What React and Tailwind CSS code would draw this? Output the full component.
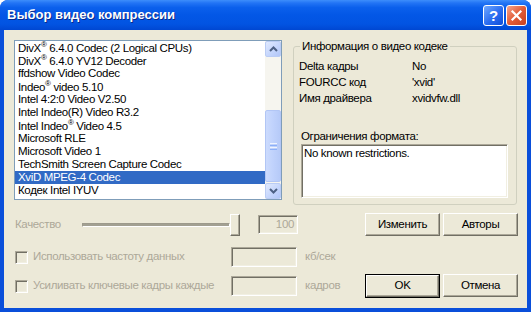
const items = [
  ["DivX", "®", " 6.4.0 Codec (2 Logical CPUs)"],
  ["DivX", "®", " 6.4.0 YV12 Decoder"],
  ["ffdshow Video Codec"],
  ["Indeo", "®", " video 5.10"],
  ["Intel 4:2:0 Video V2.50"],
  ["Intel Indeo(R) Video R3.2"],
  ["Intel Indeo", "®", " Video 4.5"],
  ["Microsoft RLE"],
  ["Microsoft Video 1"],
  ["TechSmith Screen Capture Codec"],
  ["XviD MPEG-4 Codec"],
  ["Кодек Intel IYUV"],
];

function ScrollBtn({ up }) {
  return (
    <div className="h-[16px] w-[16px] shrink-0 rounded-[2px] border border-[#BACCF4] bg-[linear-gradient(to_bottom_right,#E1EAFE,#C3D4FC_60%,#B1C6F8)] flex items-center justify-center">
      <svg width="9" height="6" viewBox="0 0 9 6">
        {up ? (
          <path d="M1 5 L4.5 1.5 L8 5" fill="none" stroke="#4D6185" strokeWidth="2" />
        ) : (
          <path d="M1 1 L4.5 4.5 L8 1" fill="none" stroke="#4D6185" strokeWidth="2" />
        )}
      </svg>
    </div>
  );
}

function Scrollbar() {
  return (
    <div className="w-[16px] shrink-0 flex flex-col bg-[#F6F5EF]">
      <ScrollBtn up />
      <div className="h-[53px] shrink-0" />
      <div className="h-[72px] shrink-0 rounded-[2px] border border-[#B2C6F5] bg-[linear-gradient(to_right,#CCDBFD,#C0D2FC_50%,#B6CAF8)] flex items-center justify-center">
        <div className="flex flex-col gap-[1px] w-[7px]">
          <div className="h-[1px] bg-[#EEF4FE]" />
          <div className="h-[1px] bg-[#8CB0F8]" />
          <div className="h-[1px] bg-[#EEF4FE]" />
          <div className="h-[1px] bg-[#8CB0F8]" />
        </div>
      </div>
      <div className="flex-1" />
      <ScrollBtn />
    </div>
  );
}

function Sunken({ className = "", children }) {
  return (
    <div className={`border border-t-[#ACA899] border-l-[#ACA899] border-r-white border-b-white shadow-[inset_1px_1px_0_#716F64,inset_-1px_-1px_0_#F1EFE2] ${className}`}>
      {children}
    </div>
  );
}

function Button({ children, def }) {
  const inner = (
    <div className="w-full h-full flex items-center justify-center border border-t-white border-l-white border-r-[#716F64] border-b-[#716F64] shadow-[inset_-1px_-1px_0_#ACA899] bg-[#ECE9D8]">
      {children}
    </div>
  );
  if (def) {
    return <div className="w-[75px] h-[24px] border border-black">{inner}</div>;
  }
  return <div className="w-[75px] h-[23px]">{inner}</div>;
}

function Checkbox() {
  return (
    <div className="w-[13px] h-[13px] shrink-0 bg-[#ECE9D8] border border-t-[#ACA899] border-l-[#ACA899] border-r-white border-b-white shadow-[inset_1px_1px_0_#716F64,inset_-1px_-1px_0_#F1EFE2]" />
  );
}

export default function App() {
  return (
    <div className="w-[531px] h-[312px] bg-white font-['Liberation_Sans',Arial,sans-serif] text-[11.5px] tracking-[-0.35px] text-black">
      <div className="w-full h-full flex flex-col rounded-t-[8px] overflow-hidden bg-[#0A4FDA]">
        <div className="h-[30px] shrink-0 flex items-center pl-[7px] pr-[4px] bg-[linear-gradient(to_bottom,#3D8EFB_0%,#2274F5_10%,#0B60EC_25%,#0357E6_50%,#0254E2_80%,#0047D2_100%)]">
          <span className="text-white font-bold text-[13px] tracking-[0px] [text-shadow:1px_1px_0_#0A2A8A]">
            Выбор видео компрессии
          </span>
          <div className="ml-auto flex gap-[2px]">
            <div className="w-[21px] h-[21px] rounded-[3px] border border-white bg-[linear-gradient(135deg,#6FA8FF,#2A6CF0_55%,#0E4DD8)] flex items-center justify-center text-white font-bold text-[15px] leading-none tracking-[0px]">
              ?
            </div>
            <div className="w-[21px] h-[21px] rounded-[3px] border border-white bg-[linear-gradient(135deg,#F5A58E,#E25C37_50%,#C6411F)] flex items-center justify-center">
              <svg width="19" height="19" viewBox="0 0 19 19">
                <path d="M5.5 5.5 L13.5 13.5 M13.5 5.5 L5.5 13.5" stroke="white" strokeWidth="2.2" strokeLinecap="square" />
              </svg>
            </div>
          </div>
        </div>

        <div className="flex-1 mx-[4px] mb-[4px] bg-[#ECE9D8] pt-[10px] pl-[10px] pr-[9px] flex flex-col">
          <div className="flex h-[165px] shrink-0">
            <div className="w-[268px] h-[160px] border border-[#7F9DB9] bg-white flex">
              <div className="w-[250px] flex flex-col">
                {items.map((t, i) => (
                  <div
                    key={i}
                    className={`h-[13px] leading-[13px] pl-[3px] whitespace-nowrap ${i === 10 ? "bg-[#316AC5] text-white" : ""}`}
                  >
                    {t[0]}
                    {t[1] && <span className="text-[8px] align-super leading-none">{t[1]}</span>}
                    {t[2]}
                  </div>
                ))}
              </div>
              <Scrollbar />
            </div>

            <fieldset className="ml-[11px] w-[224px] h-[165px] border border-[#D0D0BF] rounded-[3px] pl-[5px] pr-[8px]">
              <legend className="ml-[1px] px-[2px] leading-[13px]">Информация о видео кодеке</legend>
              <div className="mt-[6px] flex flex-col">
                <div className="flex h-[16px] items-center">
                  <span className="w-[113px]">Delta кадры</span>
                  <span>No</span>
                </div>
                <div className="flex h-[16px] items-center">
                  <span className="w-[113px]">FOURCC код</span>
                  <span>'xvid'</span>
                </div>
                <div className="flex h-[16px] items-center">
                  <span className="w-[113px]">Имя драйвера</span>
                  <span>xvidvfw.dll</span>
                </div>
              </div>
              <div className="mt-[22px] h-[15px] leading-[15px] ml-[2px]">Ограничения формата:</div>
              <Sunken className="ml-[2px] w-[207px] h-[54px] bg-white">
                <div className="pl-[2px] pt-[1px] leading-[14px]">No known restrictions.</div>
              </Sunken>
            </fieldset>
          </div>

          <div className="mt-[8px] h-[23px] shrink-0 flex items-center text-[#ACA899]">
            <div className="w-[68px] pl-[1px]">Качество</div>
            <div className="w-[158px] h-[22px] flex items-center">
              <div className="flex-1 h-[4px] border border-t-[#9D9A8C] border-l-[#9D9A8C] border-b-white border-r-white bg-[#716F64]/60" />
              <div className="w-[10px] h-[22px] border border-t-white border-l-white border-r-[#716F64] border-b-[#716F64] shadow-[inset_-1px_-1px_0_#ACA899] bg-[#ECE9D8]" />
            </div>
            <Sunken className="ml-[18px] w-[40px] h-[19px] flex items-center justify-end pr-[3px]">100</Sunken>
            <div className="ml-auto flex gap-[3px] text-black">
              <Button>Изменить</Button>
              <Button>Авторы</Button>
            </div>
          </div>

          <div className="mt-[11px] h-[20px] shrink-0 flex items-center text-[#ACA899]">
            <div className="w-[217px] flex items-center pl-[1px]">
              <Checkbox />
              <span className="ml-[5px]">Использовать частоту данных</span>
            </div>
            <Sunken className="w-[66px] h-[20px]" />
            <span className="ml-[8px]">кб/сек</span>
          </div>

          <div className="mt-[7px] h-[24px] shrink-0 flex items-center text-[#ACA899]">
            <div className="w-[217px] flex items-center pl-[1px]">
              <Checkbox />
              <span className="ml-[5px]">Усиливать ключевые кадры каждые</span>
            </div>
            <Sunken className="w-[66px] h-[20px]" />
            <span className="ml-[8px]">кадров</span>
            <div className="ml-auto flex gap-[3px] text-black">
              <Button def>OK</Button>
              <Button>Отмена</Button>
            </div>
          </div>
        </div>
      </div>
    </div>
  );
}
